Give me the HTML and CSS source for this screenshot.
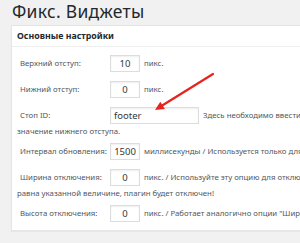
FILE: index.html
```html
<!DOCTYPE html>
<html lang="ru">
<head>
<meta charset="utf-8">
<link rel="stylesheet" href="styles.css">
</head>
<body>
<div class="wrap">
  <h1 class="title">Фикс. Виджеты</h1>
  <div class="postbox">
    <h2 class="hndle">Основные настройки</h2>
    <div class="inside">
      <div class="row">
        <div class="line"><label class="lbl">Верхний отступ:</label><input class="field num" value="10"><span class="desc">пикс.</span></div>
      </div>
      <div class="row">
        <div class="line"><label class="lbl">Нижний отступ:</label><input class="field num" value="0"><span class="desc">пикс.</span></div>
      </div>
      <div class="row has-more">
        <div class="line"><label class="lbl">Стоп ID:</label><input class="field text" value="footer"><span class="desc">Здесь необходимо ввести id HTML элемента, перед которым должна остановиться прокрутка виджета. Этот параметр переопределяет</span></div>
        <div class="more">значение нижнего отступа.</div>
      </div>
      <div class="row">
        <div class="line"><label class="lbl">Интервал обновления:</label><input class="field num" value="1500"><span class="desc">миллисекунды / Используется только для совместимости с динамическими элементами</span></div>
      </div>
      <div class="row has-more">
        <div class="line"><label class="lbl">Ширина отключения:</label><input class="field num" value="0"><span class="desc">пикс. / Используйте эту опцию для отключения плагина на мобильных устройствах. Если ширина окна меньше или</span></div>
        <div class="more">равна указанной величине, плагин будет отключен!</div>
      </div>
      <div class="row">
        <div class="line"><label class="lbl">Высота отключения:</label><input class="field num" value="0"><span class="desc">пикс. / Работает аналогично опции "Ширина отключения".</span></div>
      </div>
    </div>
  </div>
  <svg class="arrow" width="300" height="243" viewBox="0 0 300 243">
    <line x1="213" y1="74" x2="162.6" y2="105.3" stroke="#e8231d" stroke-width="2.2" stroke-linecap="round"/>
    <polygon points="155,110 164.9,108.9 160.3,101.7" fill="#e8231d"/>
  </svg>
</div>
</body>
</html>
```
FILE: styles.css
```css
html, body {
  margin: 0;
  padding: 0;
  background: #f1f1f1;
  overflow: hidden;
  width: 300px;
  height: 243px;
}
.wrap {
  position: relative;
  padding: 0 0 0 11px;
  font-family: "Noto Sans", "Open Sans", sans-serif;
  color: #50575e;
}
.title {
  margin: 0;
  padding: 0 0 0 1px;
  height: 25px;
  font-size: 17.5px;
  font-weight: 400;
  letter-spacing: 0.3px;
  line-height: 23px;
  color: #23282d;
}
.postbox {
  width: 640px;
  background: #fff;
  border: 1px solid #e5e5e5;
  box-shadow: 0 1px 1px rgba(0,0,0,0.04);
}
.hndle {
  margin: 0;
  padding: 0 0 0 5px;
  height: 20px;
  line-height: 20px;
  font-size: 8.8px;
  font-weight: 700;
  color: #23282d;
  border-bottom: 1px solid #eee;
}
.inside {
  padding: 7px 0 0 5px;
}
.row {
  margin: 0 0 8px;
  font-size: 7.8px;
  white-space: nowrap;
}
.row.has-more {
  margin-bottom: 4px;
}
.line {
  display: flex;
  align-items: center;
  height: 18px;
  gap: 4px;
}
.more {
  height: 14px;
  line-height: 14px;
}
.lbl {
  flex: none;
  width: 86px;
  margin-left: 3px;
}
.field {
  flex: none;
  box-sizing: border-box;
  height: 17px;
  margin: 0;
  padding: 0 3px;
  border: 1px solid #ddd;
  box-shadow: inset 0 1px 2px rgba(0,0,0,0.07);
  font-family: "Noto Sans", "Open Sans", sans-serif;
  font-size: 9.5px;
  color: #32373c;
  background: #fff;
}
.num {
  width: 30px;
  text-align: center;
}
.text {
  width: 89px;
  text-align: left;
}
.arrow {
  position: absolute;
  left: 0;
  top: 0;
  pointer-events: none;
}
```
